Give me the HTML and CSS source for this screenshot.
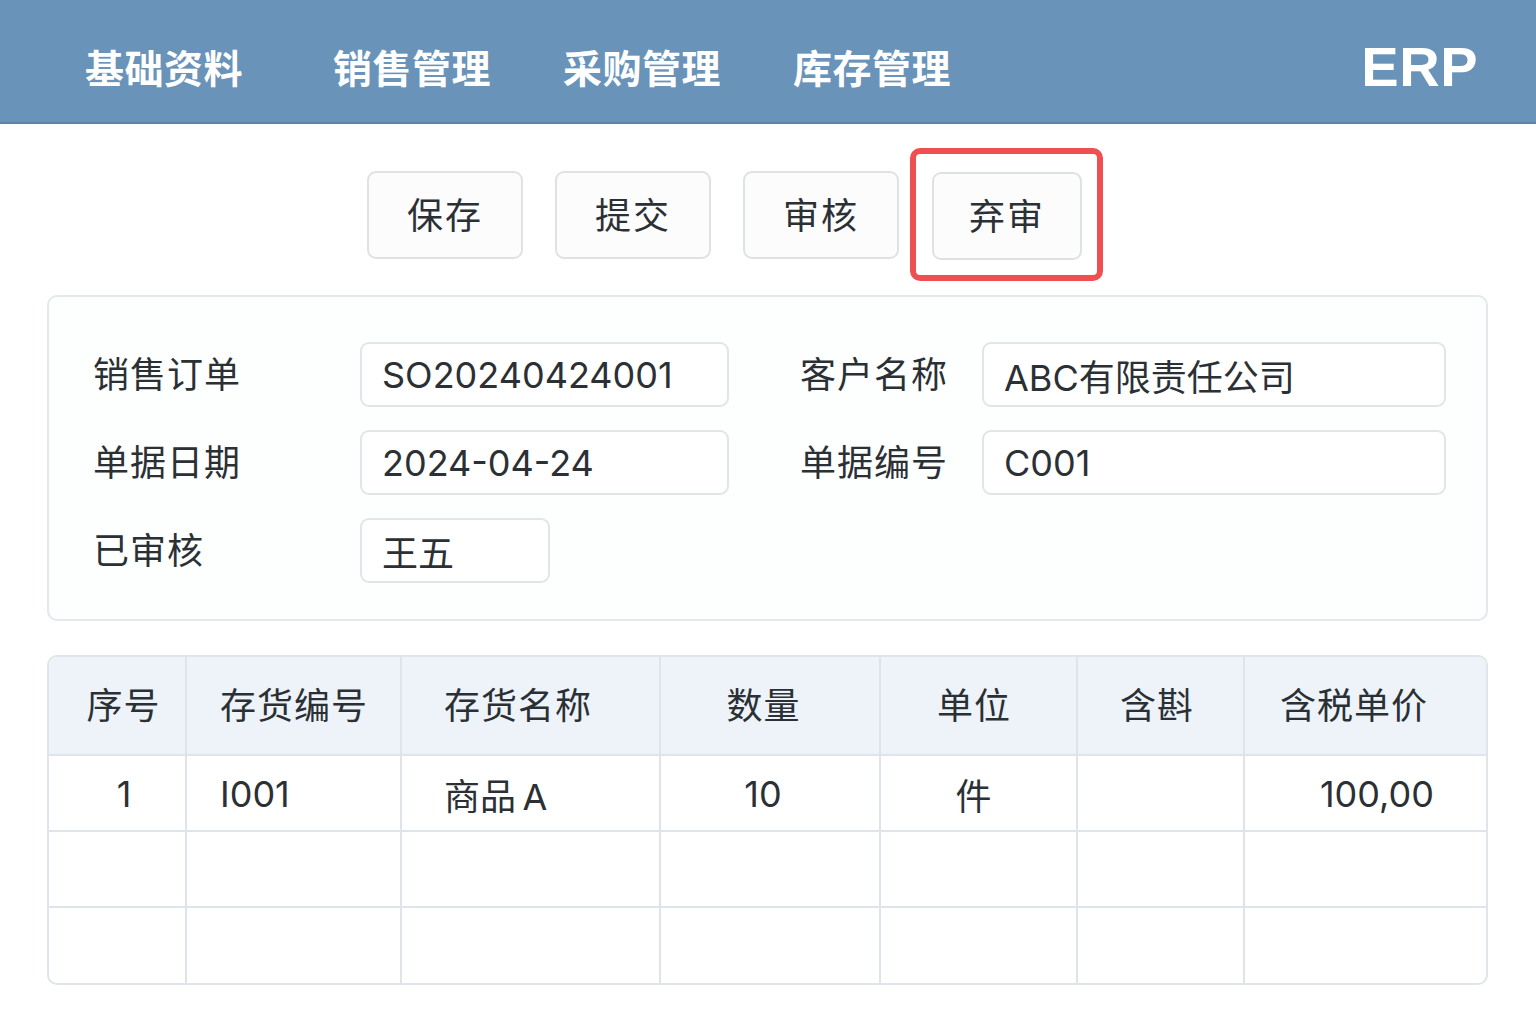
FILE: index.html
```html
<!DOCTYPE html>
<html lang="zh-CN">
<head>
    <meta charset="UTF-8">
    <meta name="viewport" content="width=device-width, initial-scale=1.0">
    <title>ERP - 销售订单</title>
    <link rel="stylesheet" href="styles.css">
</head>
<body>
    <header class="topbar">
        <nav class="menu">
            <a class="menu-item first">基础资料</a>
            <a class="menu-item">销售管理</a>
            <a class="menu-item">采购管理</a>
            <a class="menu-item">库存管理</a>
        </nav>
        <div class="brand">ERP</div>
    </header>

    <div class="toolbar">
        <button class="btn">保存</button>
        <button class="btn">提交</button>
        <button class="btn before-mark">审核</button>
        <div class="mark">
            <button class="btn">弃审</button>
        </div>
    </div>

    <section class="card">
        <div class="form-grid">
            <label class="lbl">销售订单</label>
            <div class="field"><span class="input wide">SO20240424001</span></div>
            <label class="lbl">客户名称</label>
            <div class="field"><span class="input full">ABC有限责任公司</span></div>

            <label class="lbl">单据日期</label>
            <div class="field"><span class="input wide">2024-04-24</span></div>
            <label class="lbl">单据编号</label>
            <div class="field"><span class="input full">C001</span></div>

            <label class="lbl">已审核</label>
            <div class="field"><span class="input short">王五</span></div>
        </div>
    </section>

    <div class="grid-wrap">
        <table class="lines">
            <colgroup>
                <col class="c-no">
                <col class="c-code">
                <col class="c-name">
                <col class="c-qty">
                <col class="c-unit">
                <col class="c-tax">
                <col class="c-price">
            </colgroup>
            <thead>
                <tr>
                    <th class="no">序号</th>
                    <th class="lft">存货编号</th>
                    <th class="lft name">存货名称</th>
                    <th class="qty">数量</th>
                    <th class="unit">单位</th>
                    <th class="tax">含斟</th>
                    <th class="price">含税单价</th>
                </tr>
            </thead>
            <tbody>
                <tr>
                    <td class="no">1</td>
                    <td class="lft">I001</td>
                    <td class="lft name">商品&thinsp;A</td>
                    <td class="qty">10</td>
                    <td class="unit">件</td>
                    <td></td>
                    <td class="rgt">100,00</td>
                </tr>
                <tr class="blank"><td></td><td></td><td></td><td></td><td></td><td></td><td></td></tr>
                <tr class="blank"><td></td><td></td><td></td><td></td><td></td><td></td><td></td></tr>
            </tbody>
        </table>
    </div>
</body>
</html>
```

FILE: styles.css
```css
* {
    box-sizing: border-box;
}
body {
    margin: 0;
    background: #ffffff;
    color: #2b3035;
    font-family: Inter, "Noto Sans CJK SC", "Noto Sans", sans-serif;
}

/* top bar */
.topbar {
    height: 124px;
    background: #6993b9;
    border-bottom: 2px solid #5a84ae;
    display: flex;
    align-items: center;
    padding: 10px 58px 0 85px;
}
.menu {
    display: flex;
    gap: 72px;
    flex: 1;
}
.menu-item {
    color: #fff;
    font-size: 39px;
    font-weight: 700;
    letter-spacing: 0.5px;
}
.menu-item.first {
    margin-right: 18px;
}
.brand {
    color: #fff;
    font-family: "Liberation Sans", Arial, sans-serif;
    font-weight: 700;
    font-size: 56px;
    letter-spacing: 0.5px;
}

/* buttons */
.toolbar {
    display: flex;
    align-items: center;
    padding: 10px 0 0 367px;
    height: 171px;
}
.btn {
    font-family: "Noto Sans CJK SC", sans-serif;
    font-size: 36px;
    color: #2b3035;
    background: #fcfcfc;
    border: 2px solid #dfe2e5;
    border-radius: 9px;
    height: 88px;
    width: 156px;
    margin-right: 32px;
    padding: 0 0 4px;
    letter-spacing: 2px;
}
.btn.before-mark {
    margin-right: 11px;
}
.mark {
    border: 6px solid #ef4f51;
    border-radius: 10px;
    padding: 18px 15px 15px 16px;
}
.mark .btn {
    margin: 0;
    width: 150px;
}

/* header card */
.card {
    margin: 0 48px 0 47px;
    height: 326px;
    border: 2px solid #e4e8ec;
    border-radius: 10px;
    background: #fdfefe;
    padding: 45px 40px 0 44px;
}
.form-grid {
    display: grid;
    grid-template-columns: 267px 440px 182px 1fr;
    grid-auto-rows: 65px;
    row-gap: 23px;
    align-items: center;
}
.lbl {
    font-size: 36px;
    letter-spacing: 1px;
    padding-bottom: 6px;
}
.input {
    display: flex;
    align-items: center;
    height: 65px;
    border: 2px solid #e1e4e8;
    border-radius: 9px;
    background: #fff;
    padding: 0 0 0 20px;
    font-size: 36px;
}
.input.wide {
    width: 369px;
}
.input.short {
    width: 190px;
}

/* detail grid */
.grid-wrap {
    margin: 34px 48px 0 47px;
    border: 2px solid #dfe5ea;
    border-radius: 10px;
    overflow: hidden;
}
.lines {
    width: 100%;
    border-collapse: collapse;
    table-layout: fixed;
    font-size: 36px;
}
.c-no { width: 137px; }
.c-code { width: 215px; }
.c-name { width: 259px; }
.c-qty { width: 220px; }
.c-unit { width: 197px; }
.c-tax { width: 167px; }
.lines th {
    background: #edf3f9;
    font-weight: 400;
    height: 98px;
    letter-spacing: 1px;
    padding-bottom: 6px;
}
.lines th, .lines td {
    border-right: 2px solid #dde4ea;
    border-bottom: 2px solid #dde4ea;
}
.lines tr > :last-child {
    border-right: none;
}
.lines tbody tr:last-child td {
    border-bottom: none;
}
.lines td {
    height: 76px;
    padding: 2px 0 0;
}
.lines .no, .lines .qty, .lines .unit, .lines .tax, .lines .price {
    text-align: center;
}
.lines .no { padding-left: 14px; }
.lines .qty { padding-right: 14px; }
.lines .unit { padding-right: 10px; }
.lines .tax { padding-right: 8px; }
.lines .price { padding-right: 24px; }
.lines .lft { text-align: left; padding-left: 33px; }
.lines .lft.name { padding-left: 42px; }
.lines .rgt { text-align: right; padding-right: 52px; }
```
